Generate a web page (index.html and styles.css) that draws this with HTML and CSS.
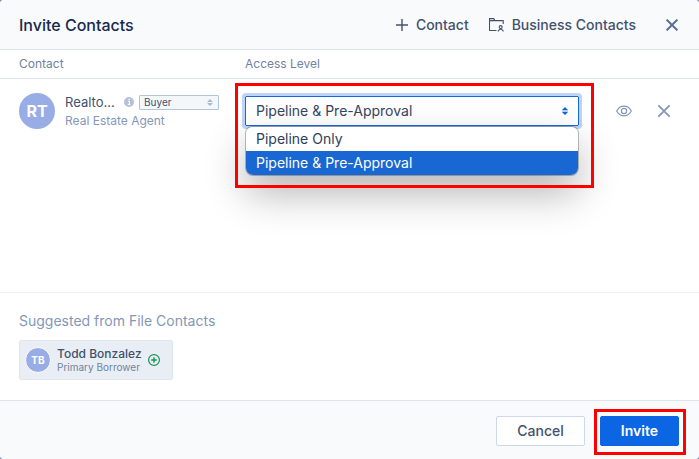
FILE: index.html
```html
<!DOCTYPE html>
<html lang="en">
<head>
<meta charset="utf-8">
<meta name="viewport" content="width=device-width, initial-scale=1">
<title>Invite Contacts</title>
<link rel="stylesheet" href="styles.css">
</head>
<body>
<main class="dialog" role="dialog" aria-labelledby="dialog-title">
  <header class="header">
    <h1 class="title" id="dialog-title">Invite Contacts</h1>
    <button class="header-action" type="button">
      <svg width="12" height="12" viewBox="0 0 12 12" fill="none" stroke="currentColor" stroke-width="1.4"><path d="M6 0v12M0 6h12"/></svg>
      Contact
    </button>
    <button class="header-action" type="button">
      <svg width="15" height="14" viewBox="0 0 15 14" fill="none" stroke="currentColor" stroke-width="1.1"><path d="M7.5 12.5h-7V.6h4.2l1.3 2h8.200v3.400M.5 2.600h5.500"/><circle cx="11.700" cy="9.100" r="1.500"/><path d="M9.300 13.600v-.8l1.600-1.600h1.600l1.600 1.600v.8"/></svg>
      Business Contacts
    </button>
    <button class="icon-button close" type="button" aria-label="Close">
      <svg width="12" height="12" viewBox="0 0 12 12" fill="none" stroke="currentColor" stroke-width="2"><path d="M.6.6l10.800 10.800M11.400.6L.6 11.400"/></svg>
    </button>
  </header>

  <section class="contacts">
    <table class="table">
      <colgroup><col class="col-contact"><col><col class="col-actions"></colgroup>
      <thead>
        <tr><th scope="col">Contact</th><th scope="col">Access Level</th><td></td></tr>
      </thead>
      <tbody>
        <tr>
          <td class="cell-contact">
            <div class="person">
              <span class="avatar">RT</span>
              <div class="person-info">
                <div class="person-line">
                  <span class="person-name">Realto...</span>
                  <svg class="info" width="10" height="10" viewBox="0 0 10 10"><circle cx="5" cy="5" r="5" fill="#b5c1da"/><path d="M4 4.300h1.400v3M3.800 7.500h2.600M4.500 2.400h1.200" fill="none" stroke="#fff" stroke-width="1.100"/></svg>
                  <span class="role-field">
                    <select class="role-select" aria-label="Role"><option>Buyer</option><option>Seller</option></select>
                    <svg class="role-arrows" width="6" height="7" viewBox="0 0 6 7" fill="#a9b8d3"><path d="M3 0l3 3H0zM3 7L0 4h6z"/></svg>
                  </span>
                </div>
                <div class="person-role">Real Estate Agent</div>
              </div>
            </div>
          </td>
          <td class="cell-access">
            <div class="access highlight">
              <select class="access-select" aria-label="Access Level">
                <option>Pipeline Only</option>
                <option selected>Pipeline &amp; Pre-Approval</option>
              </select>
              <svg class="access-arrows" width="6" height="8" viewBox="0 0 6 8" fill="#0f62e0"><path d="M0 3h6v2H0z" opacity=".3"/><path d="M3 0l3 3H0zM3 8L0 5h6z"/></svg>
              <ul class="menu" role="listbox" aria-label="Access Level options">
                <li class="option" role="option" aria-selected="false">Pipeline Only</li>
                <li class="option selected" role="option" aria-selected="true">Pipeline &amp; Pre-Approval</li>
              </ul>
            </div>
          </td>
          <td class="cell-actions">
            <div class="actions">
              <button class="icon-button" type="button" aria-label="Preview">
                <svg width="16" height="12" viewBox="0 0 16 12" fill="none" stroke="currentColor" stroke-width="1.200"><path d="M.7 6C2.300 2.800 4.900 1.200 8 1.200S13.700 2.800 15.300 6C13.700 9.200 11.100 10.800 8 10.800S2.300 9.200.7 6z"/><circle cx="8" cy="6" r="2.600"/></svg>
              </button>
              <button class="icon-button" type="button" aria-label="Remove">
                <svg width="12" height="12" viewBox="0 0 12 12" fill="none" stroke="currentColor" stroke-width="1.800"><path d="M.3.3l11.400 11.400M11.700.3L.3 11.700"/></svg>
              </button>
            </div>
          </td>
        </tr>
      </tbody>
    </table>
  </section>

  <section class="suggested">
    <h2 class="suggested-title">Suggested from File Contacts</h2>
    <button class="chip" type="button">
      <span class="avatar small">TB</span>
      <span class="chip-text">
        <span class="chip-name">Todd Bonzalez</span>
        <span class="chip-role">Primary Borrower</span>
      </span>
      <svg width="12" height="12" viewBox="0 0 12 12" fill="none" stroke="#16935a"><circle cx="6" cy="6" r="5.400" stroke-width="1.200"/><path d="M6 3.200v5.600M3.200 6h5.600" stroke-width="1.400"/></svg>
    </button>
  </section>

  <footer class="footer">
    <button class="button" type="button">Cancel</button>
    <div class="invite highlight">
      <button class="button primary" type="button">Invite</button>
    </div>
  </footer>
</main>
</body>
</html>
```
FILE: styles.css
```css
* {
  box-sizing: border-box;
}

body {
  margin: 0;
  background: #7e8bb3;
  color: #42526e;
  font-family: Inter, "Liberation Sans", sans-serif;
  font-size: 14px;
  line-height: 20px;
}

button,
select {
  margin: 0;
  padding: 0;
  color: inherit;
  font: inherit;
}

button {
  border: 0;
  background: none;
  cursor: pointer;
}

svg {
  display: block;
  flex: none;
}

.dialog {
  display: flex;
  flex-direction: column;
  min-height: 100vh;
  overflow: hidden;
  border-radius: 4px;
  background: #fff;
}

/* Header */
.header {
  display: flex;
  align-items: center;
  gap: 20px;
  height: 50px;
  padding: 0 7px 0 19px;
  border-bottom: 1px solid #dde5ee;
  background: #f9fafc;
}

.title {
  flex: 1;
  margin: 0;
  color: #172b4d;
  font-size: 16px;
  font-weight: 500;
}

.header-action {
  display: flex;
  align-items: center;
  gap: 8px;
  font-weight: 500;
}

.icon-button {
  display: flex;
  align-items: center;
  justify-content: center;
  width: 40px;
  height: 30px;
  color: #8497b8;
}

.close {
  margin-left: -4px;
  color: #5d6f93;
}

/* Contact table */
.contacts {
  flex: 1;
}

.table {
  width: 100%;
  border-spacing: 0;
  table-layout: fixed;
}

.col-contact {
  width: 245px;
}

.col-actions {
  width: 120px;
}

.table thead th,
.table thead td {
  height: 29px;
  padding: 0;
  border-bottom: 1px solid #dde5ee;
}

.table th {
  color: #71829f;
  font-size: 12px;
  font-weight: 400;
  line-height: 16px;
  text-align: left;
}

.table thead th:first-child {
  padding-left: 19px;
}

.table tbody td {
  padding: 14px 0;
  vertical-align: middle;
}

.table .cell-contact {
  padding: 13px 26px 13px 19px;
}

.person {
  display: flex;
  align-items: center;
  gap: 10px;
}

.avatar {
  display: flex;
  flex: none;
  align-items: center;
  justify-content: center;
  width: 36px;
  height: 36px;
  border-radius: 50%;
  background: #98ade6;
  color: #fff;
  font-size: 16px;
  font-weight: 700;
}

.person-info {
  flex: 1;
  min-width: 0;
}

.person-line {
  display: flex;
  align-items: center;
  height: 20px;
}

.person-name {
  flex: 1;
  font-size: 13px;
  white-space: nowrap;
}

.role-field {
  position: relative;
  width: 80px;
  height: 15px;
  margin-left: 5px;
}

.role-select {
  display: block;
  width: 100%;
  height: 15px;
  padding: 0 4px;
  border: 1px solid #b3c3da;
  border-radius: 1px;
  background: #f4f7fa;
  appearance: none;
  font-size: 10px;
  line-height: 13px;
}

.role-arrows {
  position: absolute;
  top: 4px;
  right: 6px;
  pointer-events: none;
}

.person-role {
  color: #8497b8;
  font-size: 12px;
  line-height: 18px;
}

/* Access level drop-down */
.highlight {
  position: relative;
}

.highlight::after {
  content: "";
  position: absolute;
  border: 3px solid #f00;
  pointer-events: none;
}

.access::after {
  inset: -13px -15px -62px -10px;
}

.access-select {
  display: block;
  width: 100%;
  height: 30px;
  padding: 0 10px;
  border: 1px solid #1768d8;
  border-radius: 1px;
  outline: 3px solid #bed5f8;
  background: #fff;
  appearance: none;
  color: #344563;
}

.access-arrows {
  position: absolute;
  top: 11px;
  right: 11px;
  pointer-events: none;
}

.menu {
  position: absolute;
  top: 31px;
  right: 1px;
  left: 1px;
  margin: 0;
  padding: 0;
  overflow: hidden;
  border-radius: 6px 6px 7px 7px;
  background: #fff;
  box-shadow: 0 0 0 1px rgba(0, 0, 0, 0.25), 0 18px 40px rgba(0, 0, 0, 0.3);
  list-style: none;
}

.option {
  padding: 2px 10px;
  color: #2c3e5d;
}

.option.selected {
  background: #1967d2;
  color: #fff;
}

.actions {
  display: flex;
  padding-left: 25px;
}

/* Suggested contacts */
.suggested {
  padding: 18px 19px 20px;
  border-top: 1px solid #edf1f6;
}

.suggested-title {
  margin: 0 0 9px;
  color: #8497b8;
  font-size: 14px;
  font-weight: 400;
}

.chip {
  display: flex;
  align-items: center;
  gap: 6px;
  height: 40px;
  padding: 0 12px 0 5px;
  border: 1px solid #dde5ee;
  border-radius: 2px;
  background: #e9eef4;
  text-align: left;
}

.avatar.small {
  width: 26px;
  height: 26px;
  border: 1px solid #fff;
  font-size: 10px;
}

.chip-text {
  display: flex;
  flex-direction: column;
}

.chip-name {
  font-size: 12px;
  font-weight: 500;
  line-height: 14px;
}

.chip-role {
  color: #71829f;
  font-size: 10px;
  line-height: 13px;
}

/* Footer */
.footer {
  display: flex;
  justify-content: flex-end;
  gap: 15px;
  padding: 15px 20px 13px;
  border-top: 1px solid #dde5ee;
  background: #f9fafc;
}

.button {
  height: 30px;
  padding: 0 20px;
  border: 1px solid #ccd9ea;
  border-radius: 2px;
  background: #fff;
  font-weight: 500;
}

.button.primary {
  border-color: #0c66e4;
  background: #0c66e4;
  color: #fff;
  font-weight: 600;
}

.invite::after {
  inset: -7px -7px -9px -6px;
}
```
